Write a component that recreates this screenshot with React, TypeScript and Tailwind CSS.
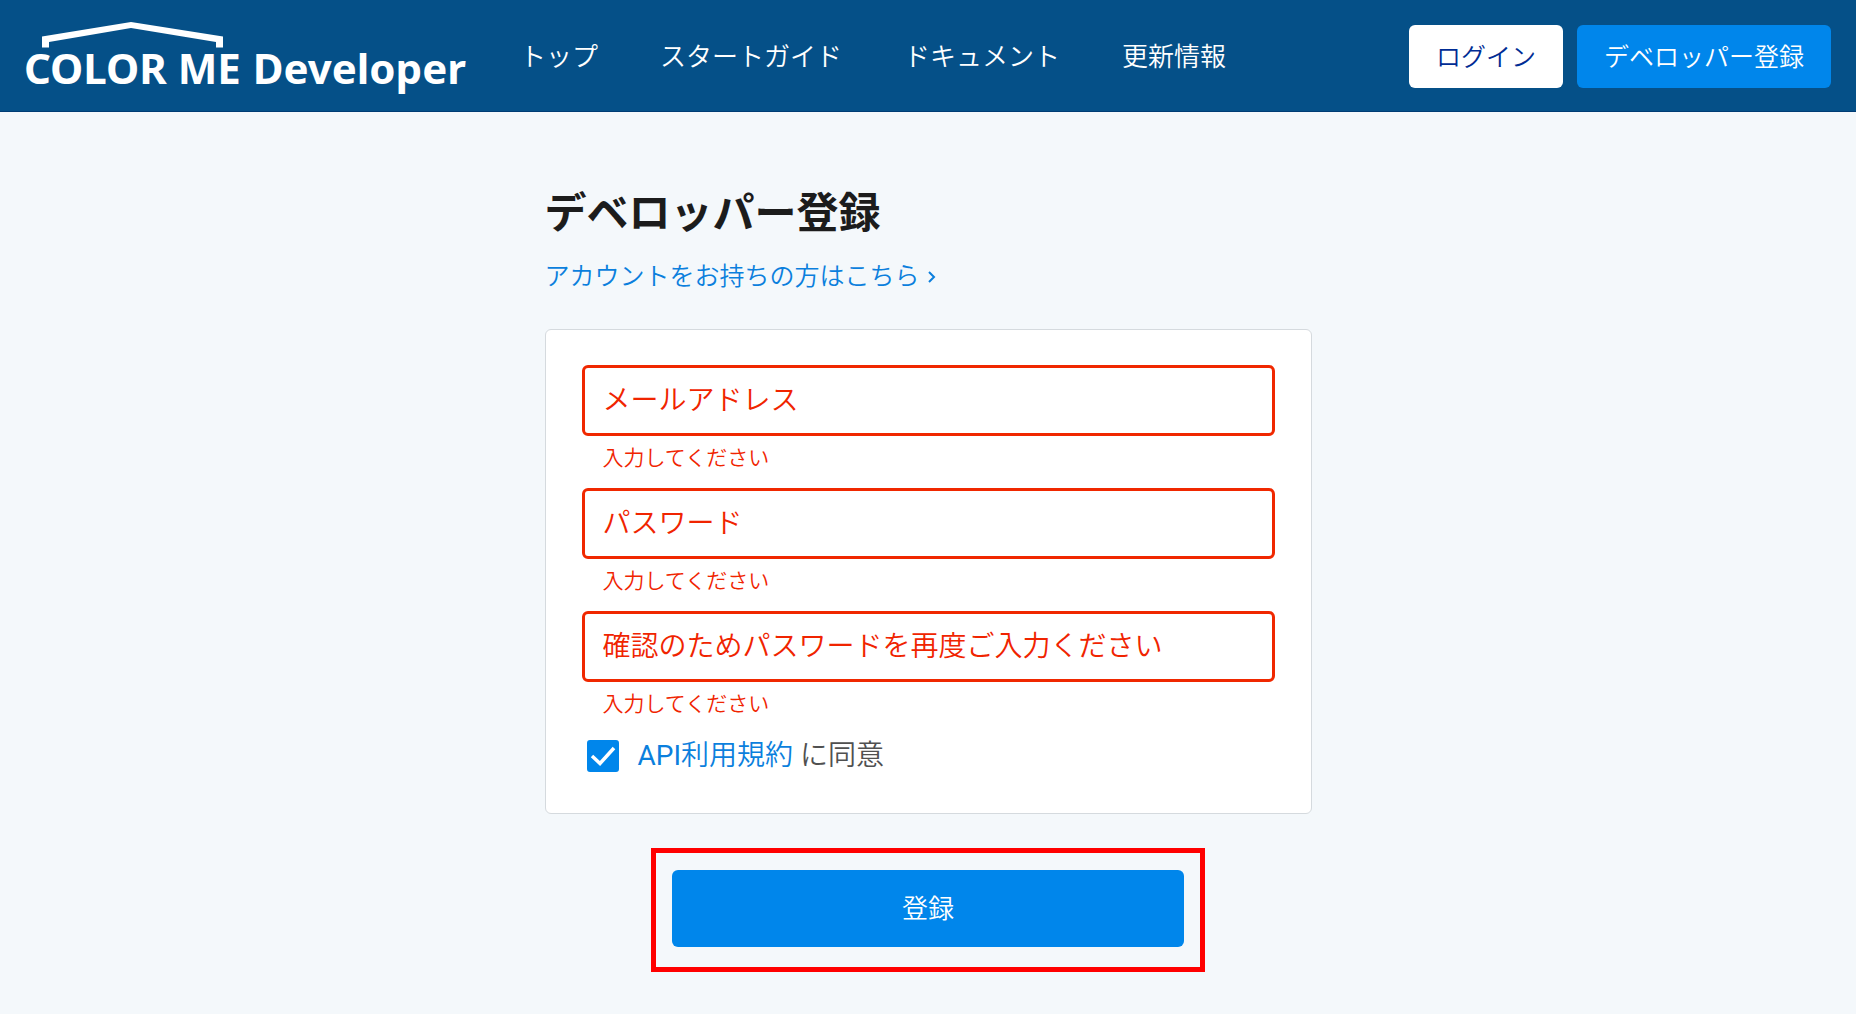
import { useState } from "react";

const navItems = ["トップ", "スタートガイド", "ドキュメント", "更新情報"];

const fields = [
  { id: "email", type: "email", label: "メールアドレス" },
  { id: "password", type: "password", label: "パスワード" },
  { id: "password-confirm", type: "password", label: "確認のためパスワードを再度ご入力ください" },
];

function Logo() {
  return (
    <a href="#" className="flex shrink-0 flex-col pb-1 text-white">
      <svg width="197" height="26" viewBox="0 0 197 26" className="ml-[18px]" fill="currentColor" aria-hidden="true">
        <path d="M0 25.500V14.500L89 0L181 14.500V25.500H174V20L89 6L7 20V25.500Z" />
      </svg>
      <span className="flex gap-3 font-['Noto_Sans'] text-[42px] leading-10 font-bold whitespace-nowrap">
        <span>COLOR ME</span>
        <span>Developer</span>
      </span>
    </a>
  );
}

function Header() {
  return (
    <header className="flex h-28 items-center border-b border-[#003c74] bg-[#055088] pt-[2px] pr-[25px] pl-6 text-white">
      <Logo />
      <nav className="ml-[54px] flex gap-[62px] pt-[2px] text-[26px] font-[350] whitespace-nowrap">
        {navItems.map((item) => (
          <a key={item} href="#">
            {item}
          </a>
        ))}
      </nav>
      <div className="ml-auto flex gap-[14px] text-[25px] font-[350] whitespace-nowrap">
        <button type="button" className="h-[63px] rounded-md bg-white px-[27px] pt-[2px] text-[#002c94]">
          ログイン
        </button>
        <button type="button" className="h-[63px] rounded-md bg-[#0086eb] px-[27px] pt-[2px]">
          デベロッパー登録
        </button>
      </div>
    </header>
  );
}

function Field({ id, type, label }: { id: string; type: string; label: string }) {
  return (
    <div className="font-[350] text-[#f02400]">
      <input
        id={id}
        type={type}
        placeholder={label}
        aria-label={label}
        aria-invalid="true"
        aria-describedby={`${id}-error`}
        className="block h-[71px] w-full rounded-md border-3 border-[#f02800] bg-white px-[18px] text-[28px] outline-none placeholder:text-[#f02400]"
      />
      <p id={`${id}-error`} className="px-[21px] pt-[6px] pb-[14px] text-[21px] leading-8">
        入力してください
      </p>
    </div>
  );
}

export default function App() {
  const [agreed, setAgreed] = useState(true);
  return (
    <div className="min-h-screen bg-[#f4f8fb] font-['Roboto','Noto_Sans_CJK_JP',sans-serif]" lang="ja">
      <Header />
      <main className="mx-auto max-w-[767px] pt-[74px]">
        <h1 className="text-[42px] leading-[56px] font-bold text-[#1c1c1c]">デベロッパー登録</h1>
        <a href="#" className="mt-[15px] flex items-center gap-2 text-[25px] leading-10 font-[350] text-[#0b7fdd]">
          アカウントをお持ちの方はこちら
          <svg width="8" height="12" viewBox="0 0 8 12" fill="none" stroke="currentColor" strokeWidth="2" aria-hidden="true">
            <path d="M1 1l5 5-5 5" />
          </svg>
        </a>
        <form onSubmit={(e) => e.preventDefault()}>
          <div className="mt-8 rounded-md border border-[#d5dade] bg-white px-9 pt-[35px] pb-[37px]">
            {fields.map((f) => (
              <Field key={f.id} {...f} />
            ))}
            <div className="mt-[2px] flex items-center pl-[5px] text-[28px] leading-10 font-[350] text-[#505050]">
              <span className="grid size-8 shrink-0">
                <input
                  id="agree"
                  type="checkbox"
                  checked={agreed}
                  onChange={(e) => setAgreed(e.target.checked)}
                  className="col-start-1 row-start-1 size-8 appearance-none rounded-[3px] border-2 border-[#0086eb] bg-white checked:bg-[#0086eb]"
                />
                {agreed && (
                  <svg
                    viewBox="0 0 32 32"
                    className="pointer-events-none col-start-1 row-start-1 size-8"
                    fill="none"
                    stroke="white"
                    strokeWidth="3.5"
                    aria-hidden="true"
                  >
                    <path d="M5 16l8 7.500L27 8" />
                  </svg>
                )}
              </span>
              <label htmlFor="agree" className="ml-[19px]">
                <a href="#" className="text-[#0b7fdd]">
                  <span className="font-normal">API</span>利用規約
                </a>{" "}
                に同意
              </label>
            </div>
          </div>
          <div className="mx-auto mt-[34px] max-w-[554px] border-5 border-[#ff0000] px-4 pt-[17px] pb-5">
            <button type="submit" className="block h-[77px] w-full rounded-md bg-[#0086eb] pt-[2px] text-[26px] font-[350] text-white">
              登録
            </button>
          </div>
        </form>
      </main>
    </div>
  );
}
